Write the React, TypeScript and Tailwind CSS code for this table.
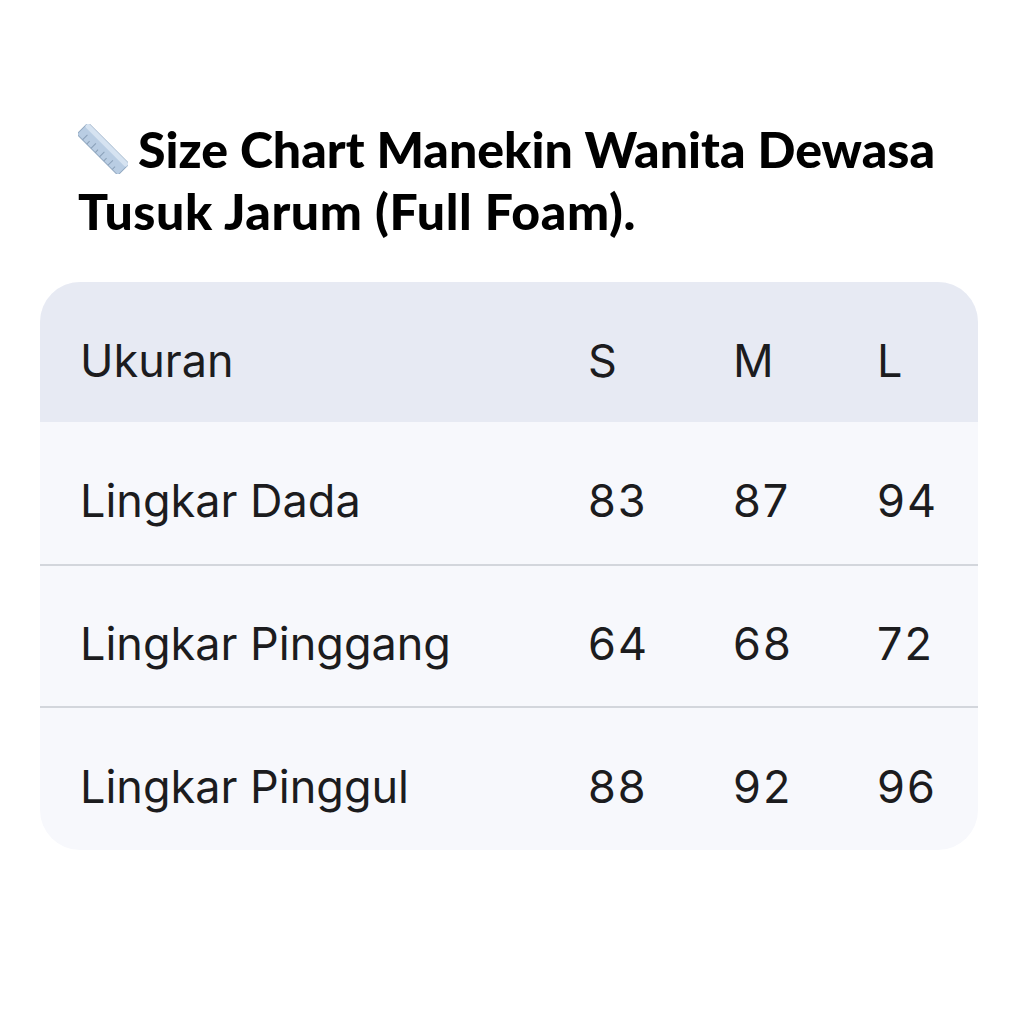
import React from "react";

const rows = [
  { label: "Lingkar Dada", s: "83", m: "87", l: "94" },
  { label: "Lingkar Pinggang", s: "64", m: "68", l: "72" },
  { label: "Lingkar Pinggul", s: "88", m: "92", l: "96" },
];

function Ruler() {
  return (
    <svg width="50" height="50" viewBox="0 0 50 50" className="shrink-0">
      <g transform="rotate(45 25 25)">
        <rect x="-4" y="17" width="58" height="16" rx="2" fill="#b9cde3" stroke="#8fa6bf" strokeWidth="1" />
        <rect x="-4" y="17" width="58" height="5" rx="2" fill="#d6e3f1" />
        {[4, 10, 16, 22, 28, 34, 40, 46].map((x, i) => (
          <line key={i} x1={x} y1="33" x2={x} y2={i % 2 === 0 ? 26 : 29} stroke="#8aa0b8" strokeWidth="1" />
        ))}
      </g>
    </svg>
  );
}

export default function App() {
  return (
    <div className="w-[1024px] h-[1024px] bg-white overflow-hidden">
      <div className="pt-[118px] pl-[78px] pr-[20px]">
        <h1
          className="text-[50px] leading-[62px] font-black text-black whitespace-nowrap"
          style={{ fontFamily: "Lato, 'Noto Sans', sans-serif" }}
        >
          <span className="inline-flex items-center align-[-6px] mr-[10px]">
            <Ruler />
          </span>
          Size Chart Manekin Wanita Dewasa
          <br />
          <span className="tracking-[0.6px]">Tusuk Jarum (Full Foam).</span>
        </h1>
      </div>
      <div
        className="mt-[40px] ml-[40px] w-[938px] rounded-[40px] overflow-hidden bg-[#f7f8fc] text-[#1c1c1e]"
        style={{ fontFamily: "Inter, 'Noto Sans', sans-serif" }}
      >
        <div className="grid grid-cols-[548px_145px_144px_1fr] items-center h-[140px] pt-[18px] bg-[#e7eaf3] text-[45px]">
          <div className="pl-[40px]">Ukuran</div>
          <div>S</div>
          <div>M</div>
          <div>L</div>
        </div>
        {rows.map((r, i) => (
          <div
            key={r.label}
            className={`grid grid-cols-[548px_145px_144px_1fr] items-center ${
              i === 2 ? "h-[144px]" : "h-[142px]"
            } pt-[16px] text-[45px] ${i > 0 ? "border-t-2 border-[#d3d6dc]" : ""}`}
          >
            <div className="pl-[40px]">{r.label}</div>
            <div className="tracking-[2px]">{r.s}</div>
            <div className="tracking-[2px]">{r.m}</div>
            <div className="tracking-[2px]">{r.l}</div>
          </div>
        ))}
      </div>
    </div>
  );
}
